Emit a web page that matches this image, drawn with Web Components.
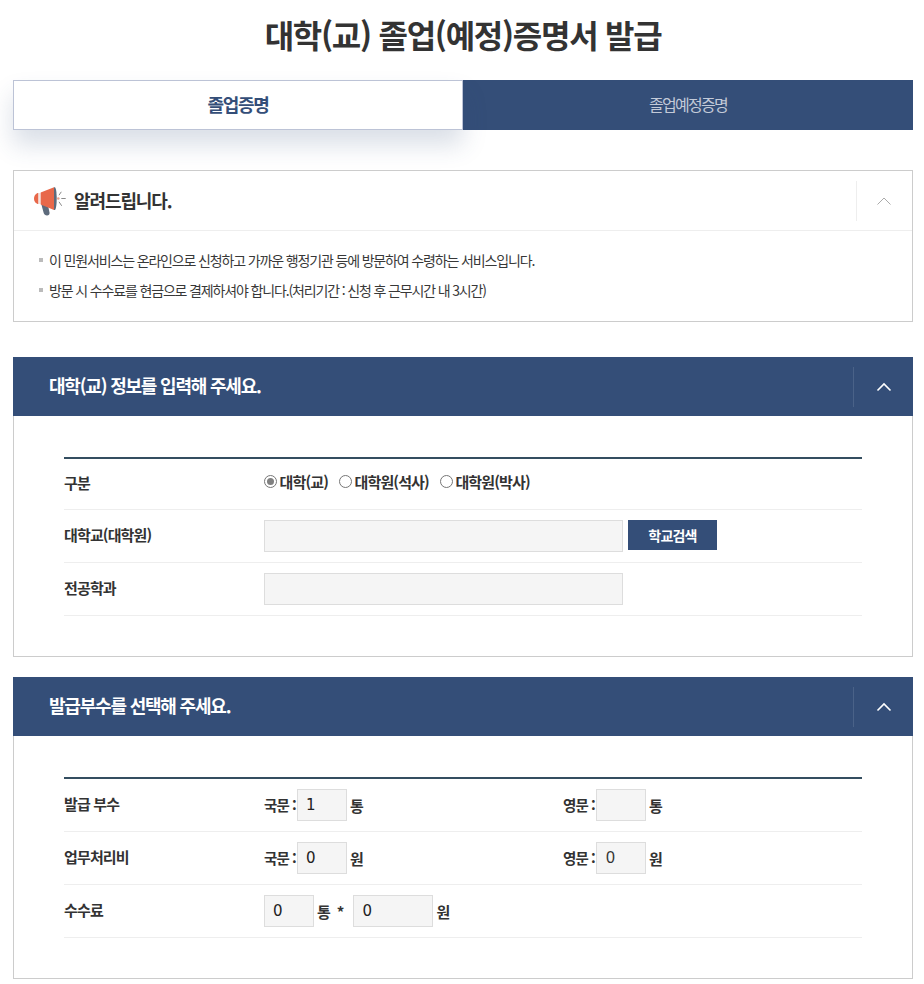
<!DOCTYPE html>
<html lang="ko"><head><meta charset="utf-8"><title>대학(교) 졸업(예정)증명서 발급</title>
<style>
html,body{margin:0;padding:0;background:#fff}
body{font-family:"Noto Sans CJK KR","Noto Sans",sans-serif;color:#333;width:924px;height:984px;overflow:hidden}
</style></head><body>
<cert-page>
  <page-title>대학(교) 졸업(예정)증명서 발급</page-title>
  <tab-bar></tab-bar>
  <notice-box></notice-box>
  <form-section heading="대학(교) 정보를 입력해 주세요." style="margin-bottom:20px">
    <form-row label="구분" h="51"><radio-group></radio-group></form-row>
    <form-row label="대학교(대학원)"><text-box w="359"></text-box><nav-button>학교검색</nav-button></form-row>
    <form-row label="전공학과"><text-box w="359"></text-box></form-row>
  </form-section>
  <form-section heading="발급부수를 선택해 주세요.">
    <form-row label="발급 부수"><pair-cell><field-label>국문 :</field-label><text-box w="50" value="1"></text-box><unit-label>통</unit-label></pair-cell><pair-cell><field-label>영문 :</field-label><text-box w="50"></text-box><unit-label>통</unit-label></pair-cell></form-row>
    <form-row label="업무처리비"><pair-cell><field-label>국문 :</field-label><text-box w="50" value="0"></text-box><unit-label>원</unit-label></pair-cell><pair-cell><field-label>영문 :</field-label><text-box w="50" value="0" alt="1"></text-box><unit-label>원</unit-label></pair-cell></form-row>
    <form-row label="수수료"><pair-cell><text-box w="50" value="0"></text-box><unit-label>통 &nbsp;*</unit-label><text-box w="80" value="0" style="margin-left:10px"></text-box><unit-label>원</unit-label></pair-cell></form-row>
  </form-section>
</cert-page>
<script>
const chevron=(c,w)=>`<svg width="16" height="10" viewBox="0 0 16 10" fill="none"><path d="M1.500 8.500 8 2l6.500 6.500" stroke="${c}" stroke-width="${w}"/></svg>`;
function def(name,css,html){
  customElements.define(name,class extends HTMLElement{
    connectedCallback(){
      if(this.shadowRoot)return;
      const s=this.attachShadow({mode:'open'});
      s.innerHTML=`<style>${css}</style>`+(typeof html==='function'?html(this):html);
    }
  });
}
def('cert-page',':host{display:block;padding:0 11px 0 13px}','<slot></slot>');
def('page-title',`:host{display:block;height:80px;box-sizing:border-box;padding-top:9px;text-align:center;font-size:32px;line-height:50px;font-weight:700;letter-spacing:-1.27px;color:#333}`,'<slot></slot>');
def('tab-bar',`:host{display:grid;grid-template-columns:450px 450px;height:50px;margin-bottom:40px}
.on{box-sizing:border-box;border:1px solid #bcc3d6;background:#fff;color:#344e78;font-size:18px;font-weight:700;letter-spacing:-1.25px;display:flex;align-items:center;justify-content:center;padding-bottom:3px;box-shadow:0 15px 25px rgba(52,78,120,.18);position:relative}
.off{background:#344e78;color:#c3cad8;font-size:16px;letter-spacing:-1.7px;display:flex;align-items:center;justify-content:center;padding-bottom:3px}`,
'<div class="on">졸업증명</div><div class="off">졸업예정증명</div>');
def('notice-box',`:host{display:block;box-sizing:border-box;height:152px;border:1px solid #ccc;margin-bottom:35px}
.h{height:60px;box-sizing:border-box;border-bottom:1px solid #eee;display:flex;align-items:center;padding-left:19px}
.h svg.mg{margin-right:7px}
.t{flex:1;font-size:18px;font-weight:700;letter-spacing:-1.1px;color:#333;padding-bottom:2px}
.tg{width:56px;height:40px;border-left:1px solid #eee;display:flex;align-items:center;justify-content:center;padding-right:1px;box-sizing:border-box}
ul{list-style:none;margin:0;padding:14px 0 0 24px}
li{font-size:14px;line-height:30px;letter-spacing:-1.15px;color:#383838;display:flex;align-items:center}
li::before{content:"";width:4px;height:4px;background:#bbb;margin:0 6px 0 1px;flex:none}`,
`<div class="h"><svg class="mg" width="34" height="30" viewBox="0 0 34 30"><path d="M8 17h6.500l2 9.500c.3 1.800-.8 3-2.500 3s-2.800-.9-3.300-2.500z" fill="#5d6b7c"/><path d="M5.500 7v11C3 18 1 15.500 1 12.500S3 7 5.500 7z" fill="#e8684a"/><rect x="5.500" y="7" width="2.200" height="11" fill="#f3e4df"/><path d="M7.700 6.500 21 1.200V24L7.700 18.500z" fill="#e8684a"/><path d="M21 1.200h.8c1.100 0 1.900 5 1.900 11.400S22.900 24 21.800 24H21z" fill="#5d6b7c"/><g stroke="#8a8a8a" stroke-width="1" fill="none"><path d="M26 9.200l2.300-3.400M28.300 12.500h4.400M26 15.800l2.700 4"/></g><circle cx="25.300" cy="12.500" r="1.300" fill="#e8a08c"/></svg><div class="t">알려드립니다.</div><div class="tg">${chevron('#aaa',1)}</div></div>
<ul><li>이 민원서비스는 온라인으로 신청하고 가까운 행정기관 등에 방문하여 수령하는 서비스입니다.</li><li>방문 시 수수료를 현금으로 결제하셔야 합니다.(처리기간 : 신청 후 근무시간 내 3시간)</li></ul>`);
def('form-section',`:host{display:block;box-sizing:border-box;border:1px solid #ccc;border-top:0;width:900px}
.h{height:59px;margin:0 -1px;background:#344e78;display:flex;align-items:center;padding-left:36px;color:#fff;font-size:18px;font-weight:700;letter-spacing:-1.2px}
.t{flex:1;padding-bottom:4px}
.tg{width:59px;height:40px;border-left:1px solid #4a6288;display:flex;align-items:center;justify-content:center}
.b{padding:41px 50px 40px 50px}
.rows{border-top:2px solid #344e60}`,
t=>`<div class="h"><div class="t">${t.getAttribute('heading')}</div><div class="tg">${chevron('#fff',1.6)}</div></div><div class="b"><div class="rows"><slot></slot></div></div>`);
def('form-row',`:host{display:flex;align-items:center;height:53px;box-sizing:border-box;border-bottom:1px solid #eee;font-size:15px;font-weight:700;letter-spacing:-.85px;color:#333}
.l{width:200px;flex:none;padding-bottom:3px}
.c{display:flex;align-items:center;flex:1}
::slotted(pair-cell){width:299px}`,
t=>{if(t.getAttribute('h'))t.style.height=t.getAttribute('h')+'px';return `<div class="l">${t.getAttribute('label')}</div><div class="c"><slot></slot></div>`});
def('text-box',`:host{display:inline-block;box-sizing:border-box;height:32px;border:1px solid #ddd;background:#f5f5f5;flex:none;font:400 15px/30px "DejaVu Sans",sans-serif;color:#222;letter-spacing:0}`,
t=>`<div style="width:${t.getAttribute('w')-2}px;text-indent:${t.hasAttribute('alt')?9:8}px;${t.hasAttribute('alt')?'font:16px/30px \'Liberation Sans\',sans-serif;color:#333':''}">${t.getAttribute('value')||''}</div>`);
def('nav-button',`:host{display:flex;align-items:center;justify-content:center;width:89px;height:30px;margin:-2px 0 0 5px;background:#344e78;color:#fff;font-size:14px;font-weight:700;letter-spacing:-.8px}`,'<slot></slot>');
def('pair-cell',`:host{display:flex;align-items:center;white-space:pre}`,'<slot></slot>');
def('field-label',`:host{display:inline-block;width:33px;flex:none;white-space:nowrap;font-size:14.500px;letter-spacing:-.9px;margin-top:-2px}`,'<slot></slot>');
def('unit-label',`:host{display:inline-block;margin-left:3px}`,'<slot></slot>');
def('radio-group',`:host{display:flex;align-items:center;margin-top:-5px}
label{display:flex;align-items:center;margin-right:11px}
i{box-sizing:border-box;width:13px;height:13px;border:1px solid #767676;border-radius:50%;background:#fff;margin-right:2.500px;flex:none;position:relative}
i.c::after{content:"";position:absolute;inset:2px;border-radius:50%;background:#808080}`,
'<label><i class="c"></i>대학(교)</label><label><i></i>대학원(석사)</label><label><i></i>대학원(박사)</label>');
</script>
</body></html>
